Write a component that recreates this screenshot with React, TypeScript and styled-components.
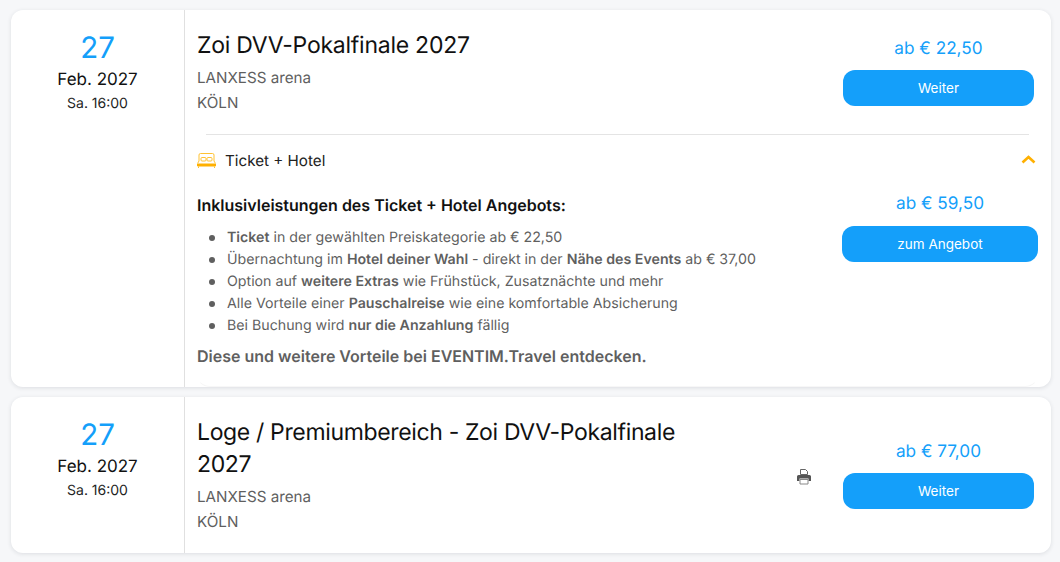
import styled, { createGlobalStyle } from "styled-components";

const GlobalStyle = createGlobalStyle`
  html, body {
    margin: 0;
    height: 562px;
    overflow: hidden;
    background: #f6f7f9;
    font-family: Inter, "Liberation Sans", sans-serif;
    text-rendering: geometricPrecision;
  }
`;

const Page = styled.div`
  display: flex;
  flex-direction: column;
  gap: 10px;
  padding: 10px 9px 0 11px;
`;

const Card = styled.div<{ $height: number }>`
  display: flex;
  height: ${(p) => p.$height}px;
  background: #fff;
  border-radius: 12px;
  box-shadow: 0 1px 4px rgba(30, 40, 60, 0.12);
  overflow: hidden;
`;

const DateCol = styled.div`
  width: 173px;
  flex: none;
  border-right: 1px solid #e0e0e0;
  display: flex;
  flex-direction: column;
  align-items: center;
  padding-top: 20px;
`;

const Day = styled.div`
  font-size: 29.5px;
  line-height: 36px;
  color: #149ffa;
`;

const Month = styled.div`
  font-size: 17px;
  line-height: 26px;
  margin-top: 1px;
  color: #111;
`;

const Time = styled.div`
  font-size: 14px;
  line-height: 22px;
  color: #222;
`;

const Main = styled.div`
  flex: 1;
  min-width: 0;
  display: flex;
  flex-direction: column;
`;

const Head = styled.div`
  display: flex;
  padding-left: 12px;
`;

const Info = styled.div<{ $width: number }>`
  width: ${(p) => p.$width}px;
  flex: none;
  padding-top: 19px;
`;

const Title = styled.div<{ $tracking: number }>`
  max-width: 500px;
  font-size: 23px;
  line-height: 32px;
  letter-spacing: ${(p) => p.$tracking}px;
  color: #111;
  margin-bottom: 4px;
`;

const Venue = styled.div`
  font-size: 15.2px;
  line-height: 25px;
  color: #5f5f5f;
`;

const PrintCol = styled.div`
  width: 91px;
  flex: none;
  display: flex;
  align-items: center;
  justify-content: center;
  padding: 23px 0 0 12px;
  box-sizing: border-box;
`;

const BuyCol = styled.div<{ $top: number; $width: number }>`
  width: ${(p) => p.$width}px;
  flex: none;
  display: flex;
  flex-direction: column;
  align-items: center;
  padding-top: ${(p) => p.$top}px;
`;

const Price = styled.div<{ $gap: number }>`
  font-size: 17.2px;
  line-height: 26px;
  color: #149ffa;
  margin-bottom: ${(p) => p.$gap}px;
`;

const Button = styled.button`
  width: 100%;
  height: 36px;
  border: 0;
  border-radius: 12px;
  background: #149ffa;
  color: #fff;
  font: 13.5px Inter, sans-serif;
`;

const Divider = styled.div`
  height: 1px;
  background: #e4e4e4;
  margin: 19px 22px 0 21px;
`;

const HotelBar = styled.div`
  display: flex;
  align-items: center;
  gap: 9px;
  height: 50px;
  padding: 0 15px 0 12px;
  color: #222;
  font-size: 15.2px;
`;

const Chevron = styled.svg`
  margin: -2px 0 0 auto;
`;

const Offer = styled.div`
  flex: 1;
  display: flex;
  margin: 0 12px 0 11px;
  padding-top: 6px;
  border: 1px solid transparent;
  border-top: 0;
  border-bottom-color: #f7f7f7;
  border-radius: 0 0 14px 14px;
`;

const OfferText = styled.div`
  flex: 1;
  min-width: 0;
  padding-top: 2px;
  color: #5f5f5f;
`;

const OfferTitle = styled.div`
  font-size: 16px;
  font-weight: 600;
  line-height: 24px;
  color: #111;
`;

const Perks = styled.ul`
  margin: 10px 0 0;
  padding: 0 0 0 30px;
  list-style: none;
  font-size: 14.2px;
  line-height: 22px;
  b {
    font-weight: 600;
  }
`;

const Perk = styled.li`
  position: relative;
  &::before {
    content: "";
    position: absolute;
    left: -18px;
    top: 8px;
    width: 6px;
    height: 6px;
    border-radius: 50%;
    background: #5f5f5f;
  }
`;

const Outro = styled.div`
  font-size: 16px;
  font-weight: 600;
  line-height: 24px;
  margin-top: 7px;
`;

const BedIcon = () => (
  <svg width="19" height="15" viewBox="0.5 0 19 15" fill="none" stroke="#ffc233" strokeWidth="1">
    <path d="M2.5 8V2a1.5 1.5 0 0 1 1.5-1.5h12A1.5 1.5 0 0 1 17.5 2v6" />
    <rect x="4.5" y="4.5" width="5" height="3.5" rx="1" />
    <rect x="10.5" y="4.5" width="5" height="3.5" rx="1" />
    <path d="M2.5 8 1 10.5M17.5 8 19 10.5" />
    <path d="M1 11h18v2H1z" fill="#ffb000" stroke="#ffb000" />
    <path d="M2 13.5V15M18 13.5V15" />
  </svg>
);

const PrintIcon = () => (
  <svg width="14" height="16" viewBox="0 0 14 16" fill="none">
    <path d="M3.5.5h5l2 2v3h-7z" stroke="#666" />
    <path d="M1.5 6h11A1.5 1.5 0 0 1 14 7.5V12h-2.5V9.5h-9V12H0V7.5A1.5 1.5 0 0 1 1.5 6z" fill="#555" />
    <path d="M3 10.5h8v4.5H3z" stroke="#888" />
  </svg>
);

const App = () => {
  return (
    <>
      <GlobalStyle />
      <Page>
        <Card $height={377}>
          <DateCol>
            <Day>27</Day>
            <Month>Feb. 2027</Month>
            <Time>Sa. 16:00</Time>
          </DateCol>
          <Main>
            <Head>
              <Info $width={646}>
                <Title $tracking={-0.25}>Zoi DVV-Pokalfinale 2027</Title>
                <Venue>LANXESS arena</Venue>
                <Venue>KÖLN</Venue>
              </Info>
              <BuyCol $top={26} $width={191}>
                <Price $gap={8}>ab € 22,50</Price>
                <Button>Weiter</Button>
              </BuyCol>
            </Head>
            <Divider />
            <HotelBar>
              <BedIcon />
              Ticket + Hotel
              <Chevron width="15" height="9" viewBox="0 0 15 9" fill="none" stroke="#ffb000" strokeWidth="2.6">
                <path d="M1.5 7.5l6-5.5 6 5.5" />
              </Chevron>
            </HotelBar>
            <Offer>
              <OfferText>
                <OfferTitle>Inklusivleistungen des Ticket + Hotel Angebots:</OfferTitle>
                <Perks>
                  <Perk>
                    <b>Ticket</b> in der gewählten Preiskategorie ab € 22,50
                  </Perk>
                  <Perk>
                    Übernachtung im <b>Hotel deiner Wahl</b> - direkt in der <b>Nähe des Events</b> ab € 37,00
                  </Perk>
                  <Perk>
                    Option auf <b>weitere Extras</b> wie Frühstück, Zusatznächte und mehr
                  </Perk>
                  <Perk>
                    Alle Vorteile einer <b>Pauschalreise</b> wie eine komfortable Absicherung
                  </Perk>
                  <Perk>
                    Bei Buchung wird <b>nur die Anzahlung</b> fällig
                  </Perk>
                </Perks>
                <Outro>Diese und weitere Vorteile bei EVENTIM.Travel entdecken.</Outro>
              </OfferText>
              <BuyCol $top={0} $width={196}>
                <Price $gap={9}>ab € 59,50</Price>
                <Button>zum Angebot</Button>
              </BuyCol>
            </Offer>
          </Main>
        </Card>
        <Card $height={156}>
          <DateCol>
            <Day>27</Day>
            <Month>Feb. 2027</Month>
            <Time>Sa. 16:00</Time>
          </DateCol>
          <Main>
            <Head>
              <Info $width={555}>
                <Title $tracking={-0.35}>Loge / Premiumbereich - Zoi DVV-Pokalfinale 2027</Title>
                <Venue>LANXESS arena</Venue>
                <Venue>KÖLN</Venue>
              </Info>
              <PrintCol>
                <PrintIcon />
              </PrintCol>
              <BuyCol $top={42} $width={191}>
                <Price $gap={8}>ab € 77,00</Price>
                <Button>Weiter</Button>
              </BuyCol>
            </Head>
          </Main>
        </Card>
      </Page>
    </>
  );
};

export default App;
